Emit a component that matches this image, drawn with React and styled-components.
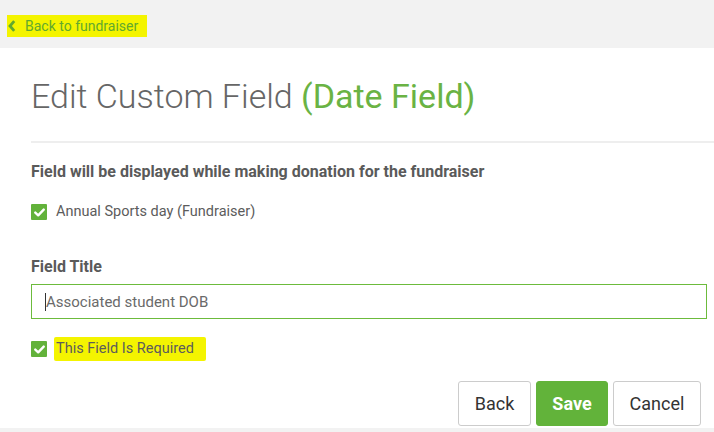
import React from "react";
import styled, { createGlobalStyle } from "styled-components";

const Global = createGlobalStyle`
  html, body { margin: 0; padding: 0; background: #f2f2f2; }
  body { font-family: Roboto, "Liberation Sans", Arial, sans-serif; }
  * { box-sizing: border-box; }
`;

const Page = styled.div`
  width: 714px;
  height: 432px;
  display: flex;
  flex-direction: column;
  background: #f2f2f2;
  overflow: hidden;
`;

const TopBar = styled.div`
  height: 48px;
  flex: none;
  display: flex;
  align-items: center;
  padding-left: 7px;
  padding-top: 3px;
`;

const Highlight = styled.span`
  background: #f4f400;
  padding: ${(p) => p.$pad || "2px 4px"};
  border-radius: 2px;
`;

const BackLink = styled.a`
  display: inline-flex;
  align-items: center;
  gap: 9px;
  font-size: 14px;
  color: #62a92e;
  text-decoration: none;
  background: #f4f400;
  padding: 3px 9px 3px 1px;
  line-height: 16px;
`;

const Panel = styled.div`
  background: #ffffff;
  height: 380px;
  flex: none;
  padding-left: 31px;
  display: flex;
  flex-direction: column;
  & > * { flex: none; }
`;

const Title = styled.h1`
  margin: 0;
  padding-top: 28px;
  font-size: 34px;
  font-weight: 300;
  color: #666666;
  line-height: 40px;
`;

const Green = styled.span`
  color: #6ab344;
  font-weight: 400;
`;

const Rule = styled.hr`
  border: none;
  border-top: 2px solid #eeeeee;
  margin: 25px 0 0 0;
`;

const Lead = styled.div`
  margin-top: 19px;
  font-size: 16px;
  font-weight: 700;
  color: #5a5a5a;
  line-height: 20px;
`;

const CheckRow = styled.label`
  display: flex;
  align-items: center;
  gap: 9px;
  margin-top: ${(p) => p.$mt || 0}px;
  font-size: 14.5px;
  color: #5c5c5c;
  line-height: 18px;
`;

const Box = styled.span`
  width: 16px;
  height: 16px;
  background: #62b23a;
  border-radius: 1px;
  display: inline-flex;
  align-items: center;
  justify-content: center;
  flex: none;
`;

const Label = styled.div`
  margin-top: 36px;
  font-size: 16px;
  font-weight: 700;
  color: #5a5a5a;
  line-height: 20px;
`;

const Input = styled.div`
  margin-top: 7px;
  width: 676px;
  height: 35px;
  border: 1.5px solid #6cbb3c;
  display: flex;
  align-items: center;
  padding-left: 13px;
  font-size: 15px;
  color: #6a6a6a;
`;

const Caret = styled.span`
  display: inline-block;
  width: 1px;
  height: 18px;
  background: #333;
`;

const Actions = styled.div`
  margin-top: 20px;
  display: flex;
  justify-content: flex-end;
  gap: 5px;
  padding-right: 13px;
`;

const Button = styled.button`
  height: 45px;
  width: ${(p) => p.$w}px;
  font-family: Roboto, "Liberation Sans", Arial, sans-serif;
  font-size: 18px;
  font-weight: ${(p) => (p.$primary ? 700 : 400)};
  color: ${(p) => (p.$primary ? "#ffffff" : "#333333")};
  background: ${(p) => (p.$primary ? "#62b33a" : "#ffffff")};
  border: 1px solid ${(p) => (p.$primary ? "#62b33a" : "#cccccc")};
  border-radius: 3px;
  padding: 0;
`;

const Check = () => (
  <svg width="11" height="9" viewBox="0 0 11 9">
    <path d="M1.3 4.6 L4.2 7.3 L9.7 1.6" fill="none" stroke="#fff" strokeWidth="2.4" strokeLinecap="round" strokeLinejoin="round" />
  </svg>
);

export default function App() {
  return (
    <Page>
      <Global />
      <TopBar>
        <BackLink href="#">
          <svg width="8" height="12" viewBox="0 0 8 12">
            <path d="M6.2 1.2 L2 6 L6.2 10.8" fill="none" stroke="#62a92e" strokeWidth="2.8" />
          </svg>
          Back to fundraiser
        </BackLink>
      </TopBar>
      <Panel>
        <Title>
          Edit Custom Field <Green>(Date Field)</Green>
        </Title>
        <Rule />
        <Lead>Field will be displayed while making donation for the fundraiser</Lead>
        <CheckRow $mt={21}>
          <Box><Check /></Box>
          Annual Sports day (Fundraiser)
        </CheckRow>
        <Label>Field Title</Label>
        <Input>
          <Caret />
          Associated student DOB
        </Input>
        <CheckRow $mt={18}>
          <Box><Check /></Box>
          <Highlight $pad="3px 12px 3px 2px" style={{ marginLeft: -2 }}>This Field Is Required</Highlight>
        </CheckRow>
        <Actions>
          <Button $w={73}>Back</Button>
          <Button $w={72} $primary>Save</Button>
          <Button $w={88}>Cancel</Button>
        </Actions>
      </Panel>
    </Page>
  );
}
